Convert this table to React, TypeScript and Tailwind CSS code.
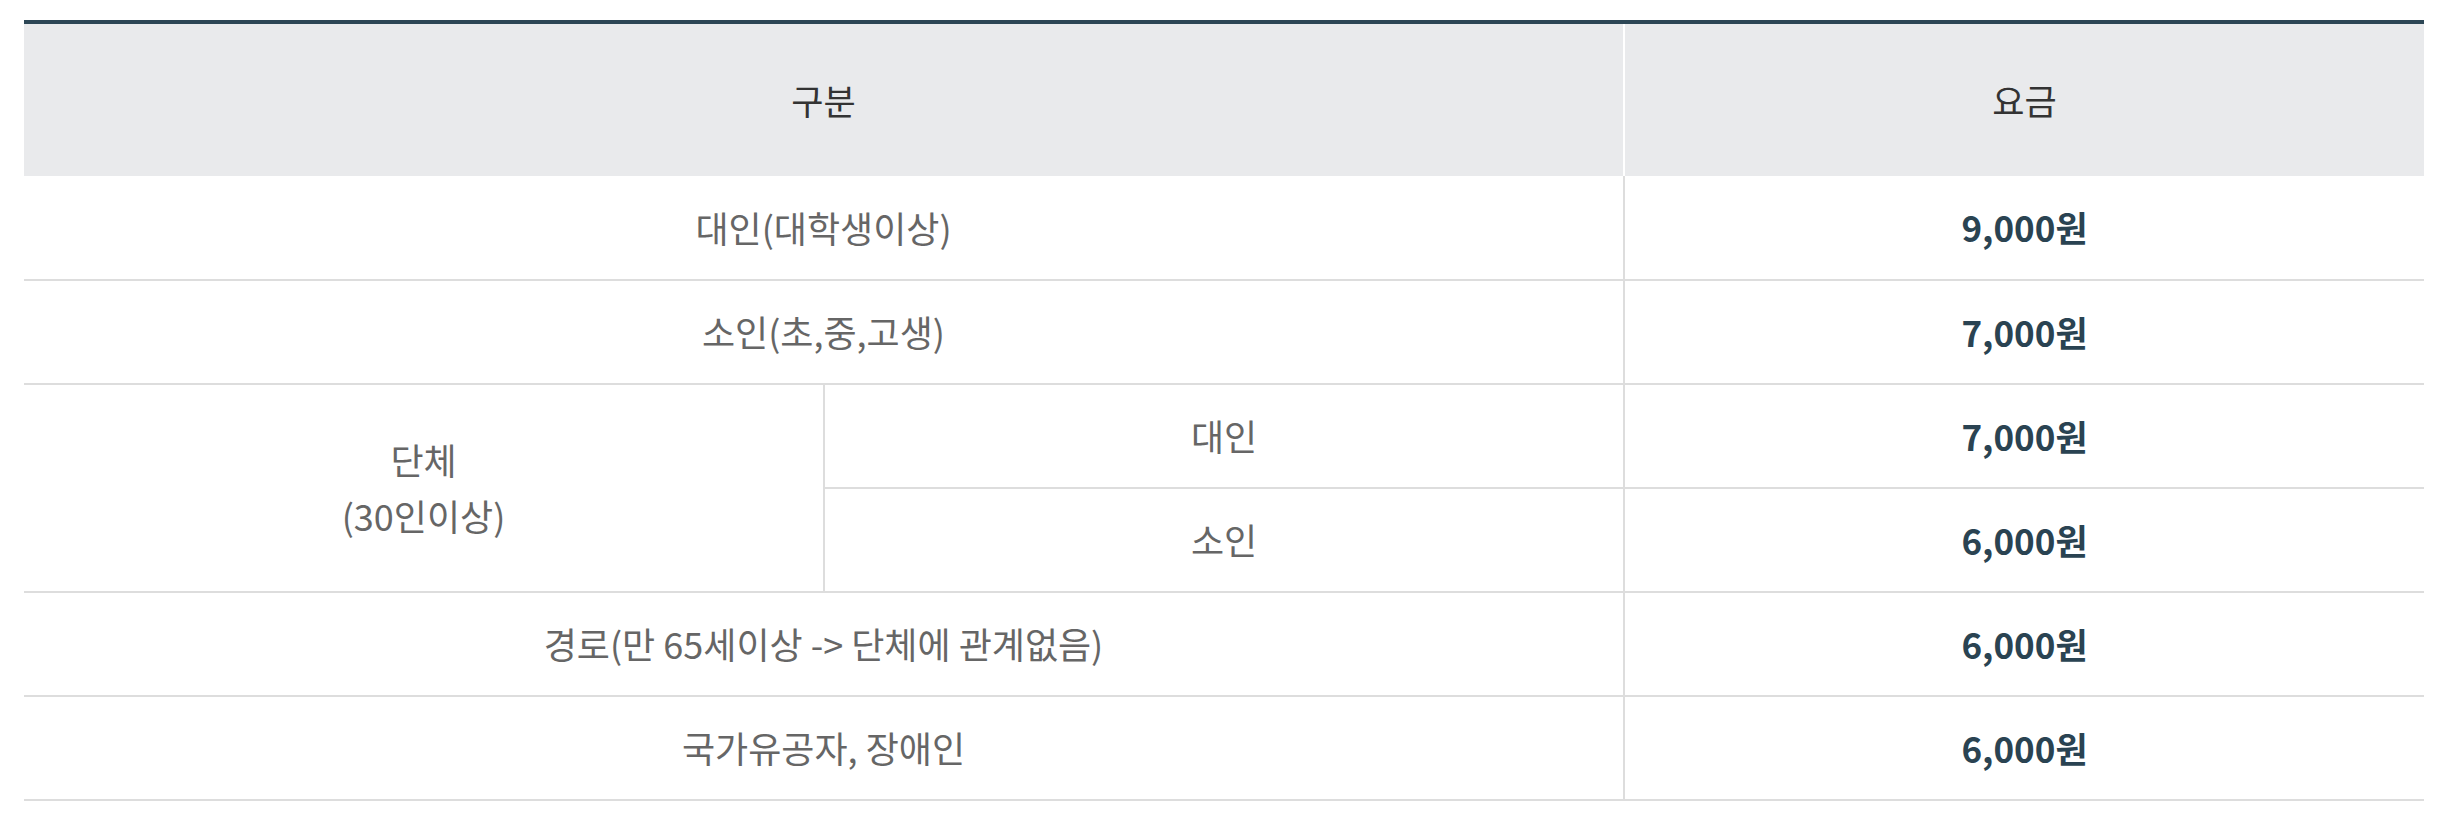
import React from 'react';

const rows: { label: string; price: string }[] = [
  { label: '대인(대학생이상)', price: '9,000원' },
  { label: '소인(초,중,고생)', price: '7,000원' },
];

const tailRows: { label: string; price: string }[] = [
  { label: '경로(만 65세이상 -> 단체에 관계없음)', price: '6,000원' },
  { label: '국가유공자, 장애인', price: '6,000원' },
];

const cell = 'h-[104px] border-b-2 border-[#dddddd] text-center align-middle p-0';
const labelCls = `${cell} text-[36px] text-[#666666]`;
const priceCls = `${cell} border-l-2 border-l-[#dddddd] font-bold text-[#2a4352]`;

export default function App() {
  return (
    <div
      className="bg-white w-[2454px] h-[826px] pt-[20px] pl-[24px]"
      style={{ fontFamily: '"Noto Sans CJK KR", "Noto Sans", sans-serif' }}
    >
      <table className="w-[2400px] table-fixed border-collapse text-[35px] leading-[1.55]">
        <colgroup>
          <col className="w-[800px]" />
          <col className="w-[800px]" />
          <col className="w-[800px]" />
        </colgroup>
        <thead>
          <tr className="border-t-4 border-[#2c4655] bg-[#e9eaec]">
            <th colSpan={2} className="h-[154px] p-0 font-normal text-[#333333] border-r-2 border-r-white">
              구분
            </th>
            <th className="h-[154px] p-0 font-normal text-[#333333]">요금</th>
          </tr>
        </thead>
        <tbody>
          {rows.map((r) => (
            <tr key={r.label}>
              <td colSpan={2} className={labelCls}>{r.label}</td>
              <td className={priceCls}>{r.price}</td>
            </tr>
          ))}
          <tr>
            <td rowSpan={2} className={`${labelCls} border-r-2 border-r-[#dddddd]`}>
              단체
              <br />
              (30인이상)
            </td>
            <td className={labelCls}>대인</td>
            <td className={priceCls}>7,000원</td>
          </tr>
          <tr>
            <td className={labelCls}>소인</td>
            <td className={priceCls}>6,000원</td>
          </tr>
          {tailRows.map((r) => (
            <tr key={r.label}>
              <td colSpan={2} className={labelCls}>{r.label}</td>
              <td className={priceCls}>{r.price}</td>
            </tr>
          ))}
        </tbody>
      </table>
    </div>
  );
}
